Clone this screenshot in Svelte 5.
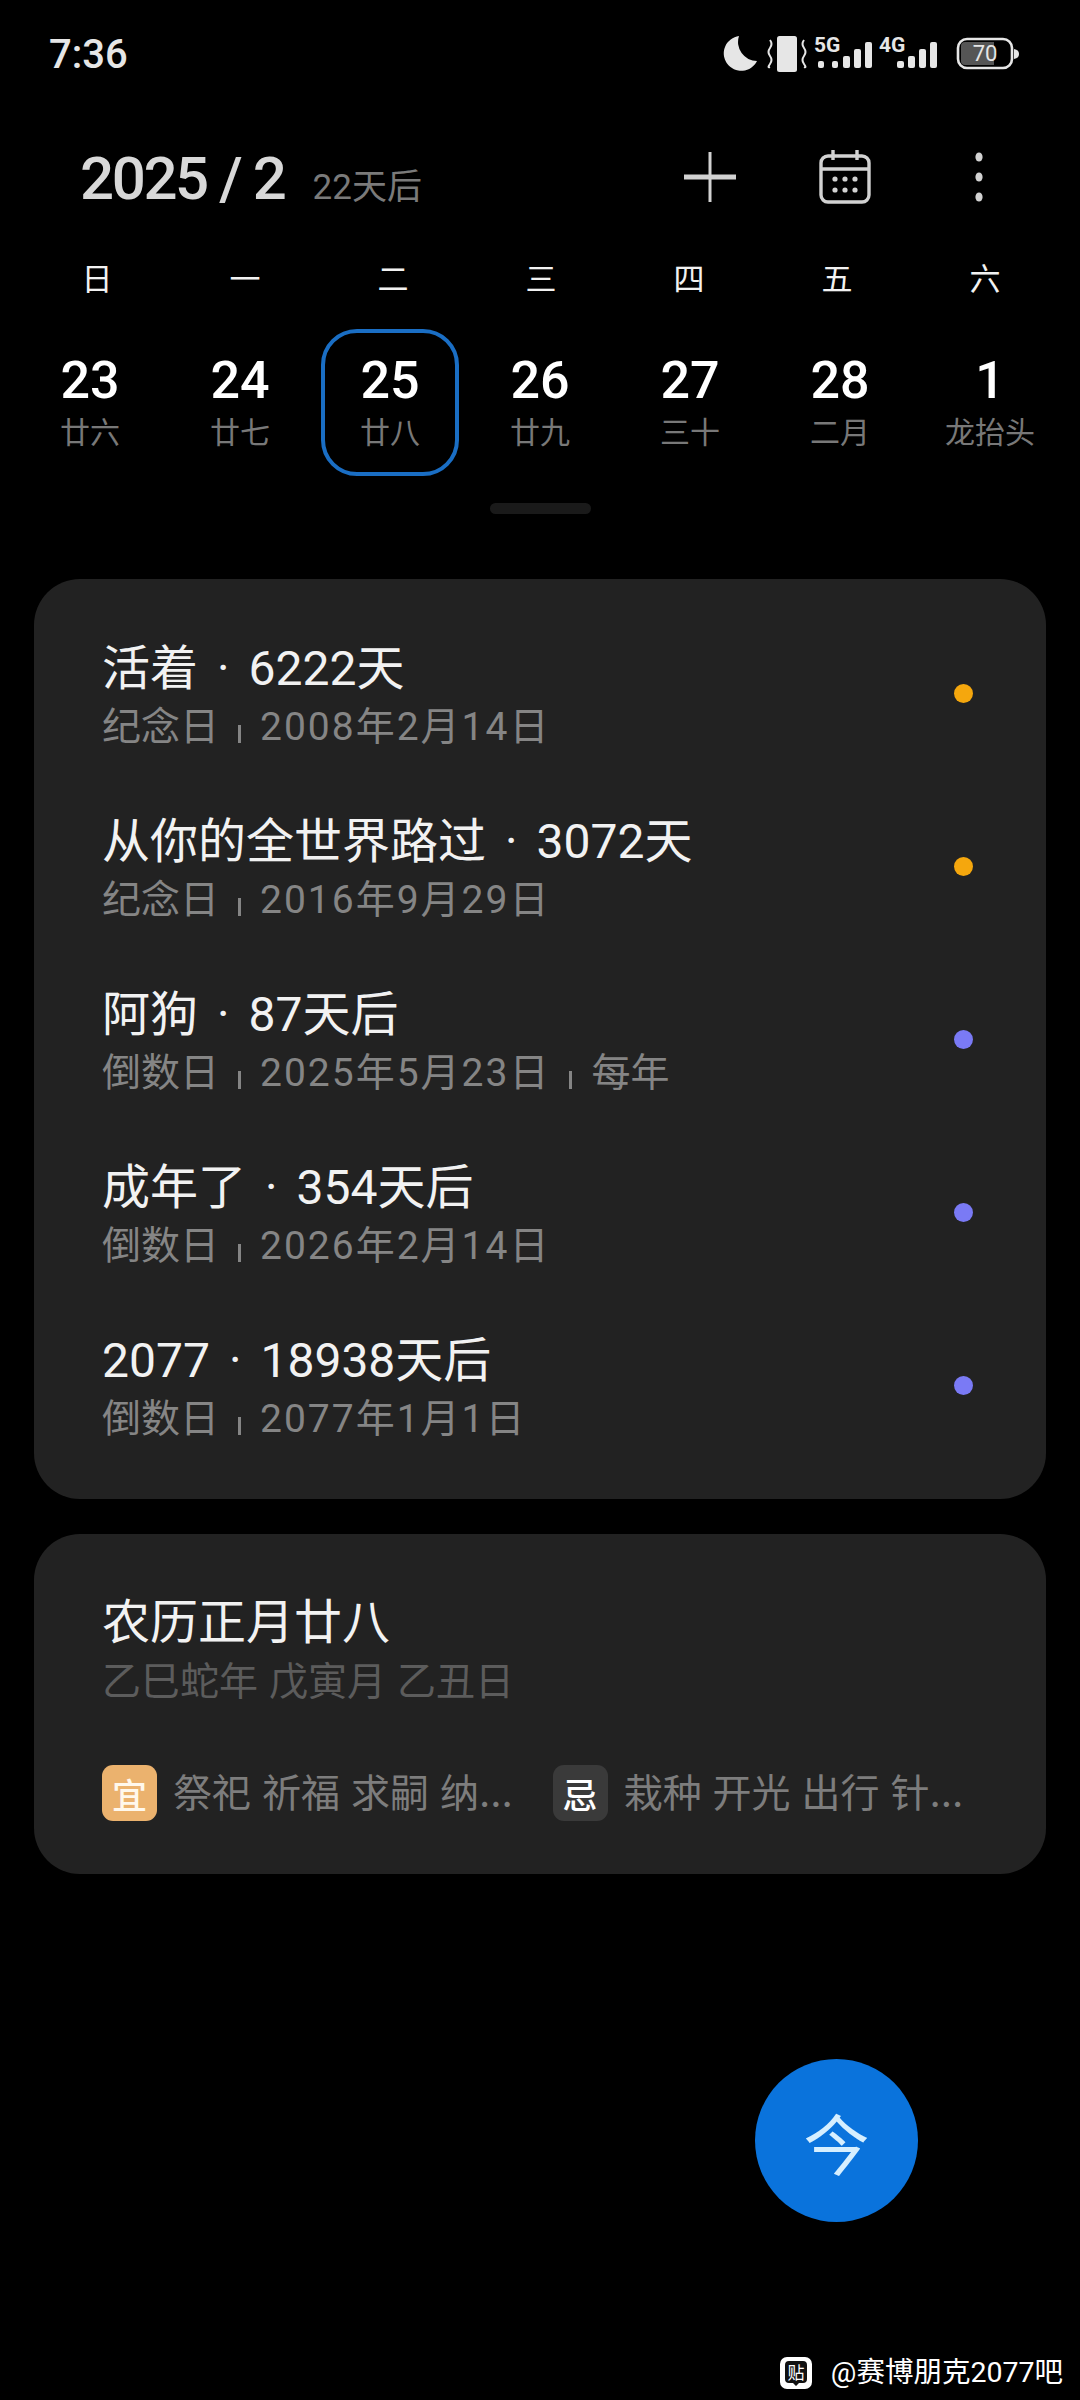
<script>
  const weekdays = ["日", "一", "二", "三", "四", "五", "六"];
  const days = [
    { n: "23", l: "廿六" },
    { n: "24", l: "廿七" },
    { n: "25", l: "廿八", on: true },
    { n: "26", l: "廿九" },
    { n: "27", l: "三十" },
    { n: "28", l: "二月" },
    { n: "1", l: "龙抬头" },
  ];
  const events = [
    { t: "活着", c: "6222天", meta: ["纪念日", "2008年2月14日"], dot: "#f5a70d" },
    { t: "从你的全世界路过", c: "3072天", meta: ["纪念日", "2016年9月29日"], dot: "#f5a70d" },
    { t: "阿狗", c: "87天后", meta: ["倒数日", "2025年5月23日", "每年"], dot: "#7a7af5" },
    { t: "成年了", c: "354天后", meta: ["倒数日", "2026年2月14日"], dot: "#7a7af5" },
    { t: "2077", c: "18938天后", meta: ["倒数日", "2077年1月1日"], dot: "#7a7af5" },
  ];
</script>

<div class="screen">
  <div class="status">
    <span class="time">7:36</span>
    <svg class="sys" viewBox="0 0 300 50" width="300" height="50" fill="#e6e6e6">
      <path d="M19 7a17.5 17.5 0 1 0 18 25 19 19 0 0 1-18-25z" />
      <rect x="57" y="7" width="20" height="36" rx="2.5" />
      <path d="M50 11q3 4 0 8t0 8 0 8 0 3M84 11q-3 4 0 8t0 8 0 8 0 3" fill="none" stroke="#e6e6e6" stroke-width="2" />
      <text x="94" y="23" class="net">5G</text>
      <rect x="98" y="32" width="6" height="7" rx="2" />
      <rect x="112" y="32" width="6" height="7" rx="2" />
      <rect x="123" y="27" width="7" height="12" rx="2" />
      <rect x="134" y="20" width="7" height="19" rx="2" />
      <rect x="145" y="13" width="7" height="26" rx="2" />
      <text x="159" y="23" class="net">4G</text>
      <rect x="177" y="32" width="7" height="7" rx="2" />
      <rect x="188" y="27" width="7" height="12" rx="2" />
      <rect x="199" y="20" width="7" height="19" rx="2" />
      <rect x="210" y="13" width="7" height="26" rx="2" />
      <rect x="238" y="10" width="54" height="29" rx="9" fill="none" stroke="#e6e6e6" stroke-width="2.6" />
      <path d="M241 17a4 4 0 0 1 4-4h29v23h-29a4 4 0 0 1-4-4z" fill="#555" />
      <text x="265" y="32" text-anchor="middle" class="bat">70</text>
      <path d="M294 20q5 1 5 5t-5 5z" />
    </svg>
  </div>

  <div class="head">
    <div class="month">
      <span class="ym">2025 / 2</span>
      <span class="later">22天后</span>
    </div>
    <div class="tools">
      <svg viewBox="0 0 52 52" width="52" height="52" fill="none" stroke="#d2d2d2">
        <path d="M26 1v50" stroke-width="3" />
        <path d="M0 26h52" stroke-width="5" />
      </svg>
      <svg viewBox="0 0 52 54" width="52" height="54" stroke="#d2d2d2" stroke-width="3.4" fill="none">
        <rect x="2" y="6" width="48" height="46" rx="7" />
        <path d="M2 19h48M14 0v10M38 0v10" />
        <g fill="#d2d2d2" stroke="none">
          <circle cx="16" cy="29" r="2.6" /><circle cx="26" cy="29" r="2.6" /><circle cx="36" cy="29" r="2.6" />
          <circle cx="16" cy="40" r="2.6" /><circle cx="26" cy="40" r="2.6" /><circle cx="36" cy="40" r="2.6" />
        </g>
      </svg>
      <svg viewBox="0 0 50 52" width="50" height="52" fill="#d2d2d2">
        <ellipse cx="25" cy="6" rx="3.6" ry="4.6" />
        <ellipse cx="25" cy="26" rx="3.6" ry="4.6" />
        <ellipse cx="25" cy="46" rx="3.6" ry="4.6" />
      </svg>
    </div>
  </div>

  <div class="week">
    {#each weekdays as w}
      <span>{w}</span>
    {/each}
  </div>

  <div class="dates">
    {#each days as d}
      <div class="date" class:on={d.on}>
        <span class="num">{d.n}</span>
        <span class="lunar">{d.l}</span>
      </div>
    {/each}
  </div>

  <div class="grip"></div>

  <section class="card events">
    {#each events as e}
      <div class="event">
        <div class="event-text">
          <div class="title">{e.t}<span class="sep">·</span>{e.c}</div>
          <div class="meta">
            {#each e.meta as m, i}
              {#if i > 0}<span class="bar"></span>{/if}<span class:when={i === 1}>{m}</span>
            {/each}
          </div>
        </div>
        <span class="dot" style="background: {e.dot}"></span>
      </div>
    {/each}
  </section>

  <section class="card almanac">
    <div class="title">农历正月廿八</div>
    <div class="ganzhi">乙巳蛇年 戊寅月 乙丑日</div>
    <div class="omens">
      <div class="omen">
        <span class="tag good">宜</span>
        <span class="omen-text">祭祀 祈福 求嗣 纳...</span>
      </div>
      <div class="omen">
        <span class="tag bad">忌</span>
        <span class="omen-text">栽种 开光 出行 针...</span>
      </div>
    </div>
  </section>

  <div class="fab-row">
    <button class="fab">今</button>
  </div>

  <div class="mark">
    <svg viewBox="0 0 32 32" width="32" height="32">
      <rect width="32" height="32" rx="7" fill="#fff" />
      <path d="M9 4h14a4 4 0 0 1 4 4v14a4 4 0 0 1-4 4h-4l-3 3-3-3H9a4 4 0 0 1-4-4V8a4 4 0 0 1 4-4z" fill="#111" />
      <text x="16" y="22" text-anchor="middle" class="tie">贴</text>
    </svg>
    <span>@赛博朋克2077吧</span>
  </div>
</div>

<style>
  :global(body) {
    margin: 0;
    background: #000;
  }

  .screen {
    width: 1080px;
    height: 2400px;
    background: #000;
    color: #fff;
    font-family: Roboto, "Noto Sans CJK SC", sans-serif;
    display: flex;
    flex-direction: column;
    overflow: hidden;
  }

  .status {
    display: flex;
    justify-content: space-between;
    align-items: center;
    height: 50px;
    margin-top: 29px;
    padding: 0 60px 0 49px;
  }

  .time {
    font-size: 40px;
    font-weight: 500;
    color: #e6e6e6;
  }

  .net {
    font-size: 21px;
    font-weight: 700;
  }

  .bat {
    font-size: 22px;
  }

  .head {
    display: flex;
    justify-content: space-between;
    align-items: center;
    height: 70px;
    margin-top: 63px;
    padding: 0 76px 0 80px;
  }

  .month {
    display: flex;
    align-items: baseline;
    gap: 28px;
    padding-top: 3px;
  }

  .ym {
    font-size: 60px;
    font-weight: 500;
    color: #d8d8d8;
    letter-spacing: -2.4px;
  }

  .later {
    font-size: 35px;
    color: #7a7a7a;
  }

  .tools {
    display: flex;
    align-items: center;
    gap: 83px;
  }

  .week {
    display: grid;
    grid-template-columns: repeat(7, 148px);
    padding-left: 23px;
    margin-top: 48px;
    text-align: center;
    font-size: 31px;
    line-height: 40px;
    color: #f2f2f2;
  }

  .dates {
    display: grid;
    grid-template-columns: repeat(7, 150px);
    padding-left: 15px;
    margin-top: 29px;
  }

  .date {
    display: flex;
    flex-direction: column;
    align-items: center;
    justify-content: center;
    height: 147px;
    width: 138px;
    justify-self: center;
    box-sizing: border-box;
    border-radius: 36px;
    border: 4px solid transparent;
  }

  .date.on {
    border-color: #1a6ec4;
  }

  .num {
    font-size: 52px;
    font-weight: 500;
    line-height: 58px;
    margin-bottom: 3px;
  }

  .lunar {
    font-size: 30px;
    line-height: 40px;
    color: #787878;
    white-space: nowrap;
  }

  .grip {
    width: 101px;
    height: 11px;
    border-radius: 6px;
    background: #1a1a1a;
    align-self: center;
    margin-top: 27px;
  }

  .card {
    background: #222;
    border-radius: 46px;
    margin: 0 34px;
  }

  .events {
    margin-top: 65px;
    padding: 31px 73px 24px 68px;
  }

  .event {
    display: flex;
    justify-content: space-between;
    align-items: center;
    height: 173px;
  }

  .title {
    font-size: 48px;
    line-height: 60px;
    color: #f2f2f2;
  }

  .sep {
    margin: 0 19px;
  }

  .meta {
    display: flex;
    align-items: center;
    font-size: 39px;
    line-height: 56px;
    color: #858585;
  }

  .when {
    letter-spacing: 2px;
  }

  .bar {
    width: 3px;
    height: 18px;
    background: #858585;
    margin: 14px 19px 0;
  }

  .dot {
    width: 19px;
    height: 19px;
    border-radius: 50%;
    margin-bottom: 6px;
  }

  .almanac {
    margin-top: 35px;
    height: 340px;
    box-sizing: border-box;
    padding: 59px 68px 0;
  }

  .ganzhi {
    font-family: Inter, "Noto Sans CJK SC", sans-serif;
    font-size: 39px;
    line-height: 56px;
    color: #5c5c5c;
  }

  .omens {
    display: flex;
    margin-top: 53px;
    gap: 40px;
  }

  .omen {
    display: flex;
    align-items: center;
    gap: 16px;
  }

  .tag {
    width: 55px;
    height: 56px;
    border-radius: 11px;
    display: flex;
    align-items: center;
    justify-content: center;
    font-size: 35px;
    font-weight: 500;
    flex-shrink: 0;
  }

  .good {
    background: #ebb26e;
    color: #fff8ec;
  }

  .bad {
    background: #3a3a3a;
    color: #fff;
  }

  .omen-text {
    font-family: Inter, "Noto Sans CJK SC", sans-serif;
    font-size: 39px;
    color: #7d7d7d;
    white-space: nowrap;
    padding-bottom: 6px;
  }

  .fab-row {
    display: flex;
    justify-content: flex-end;
    padding-right: 162px;
    margin-top: 185px;
  }

  .fab {
    width: 163px;
    height: 163px;
    border-radius: 50%;
    border: none;
    background: #0a73dc;
    color: #d6efff;
    font-family: inherit;
    font-size: 66px;
    padding: 0;
  }

  .mark {
    display: flex;
    align-items: center;
    justify-content: flex-end;
    gap: 19px;
    padding-right: 17px;
    margin-top: 131px;
    font-size: 28.5px;
    line-height: 40px;
    color: #fff;
  }

  .tie {
    font-size: 17px;
    fill: #fff;
  }
</style>
